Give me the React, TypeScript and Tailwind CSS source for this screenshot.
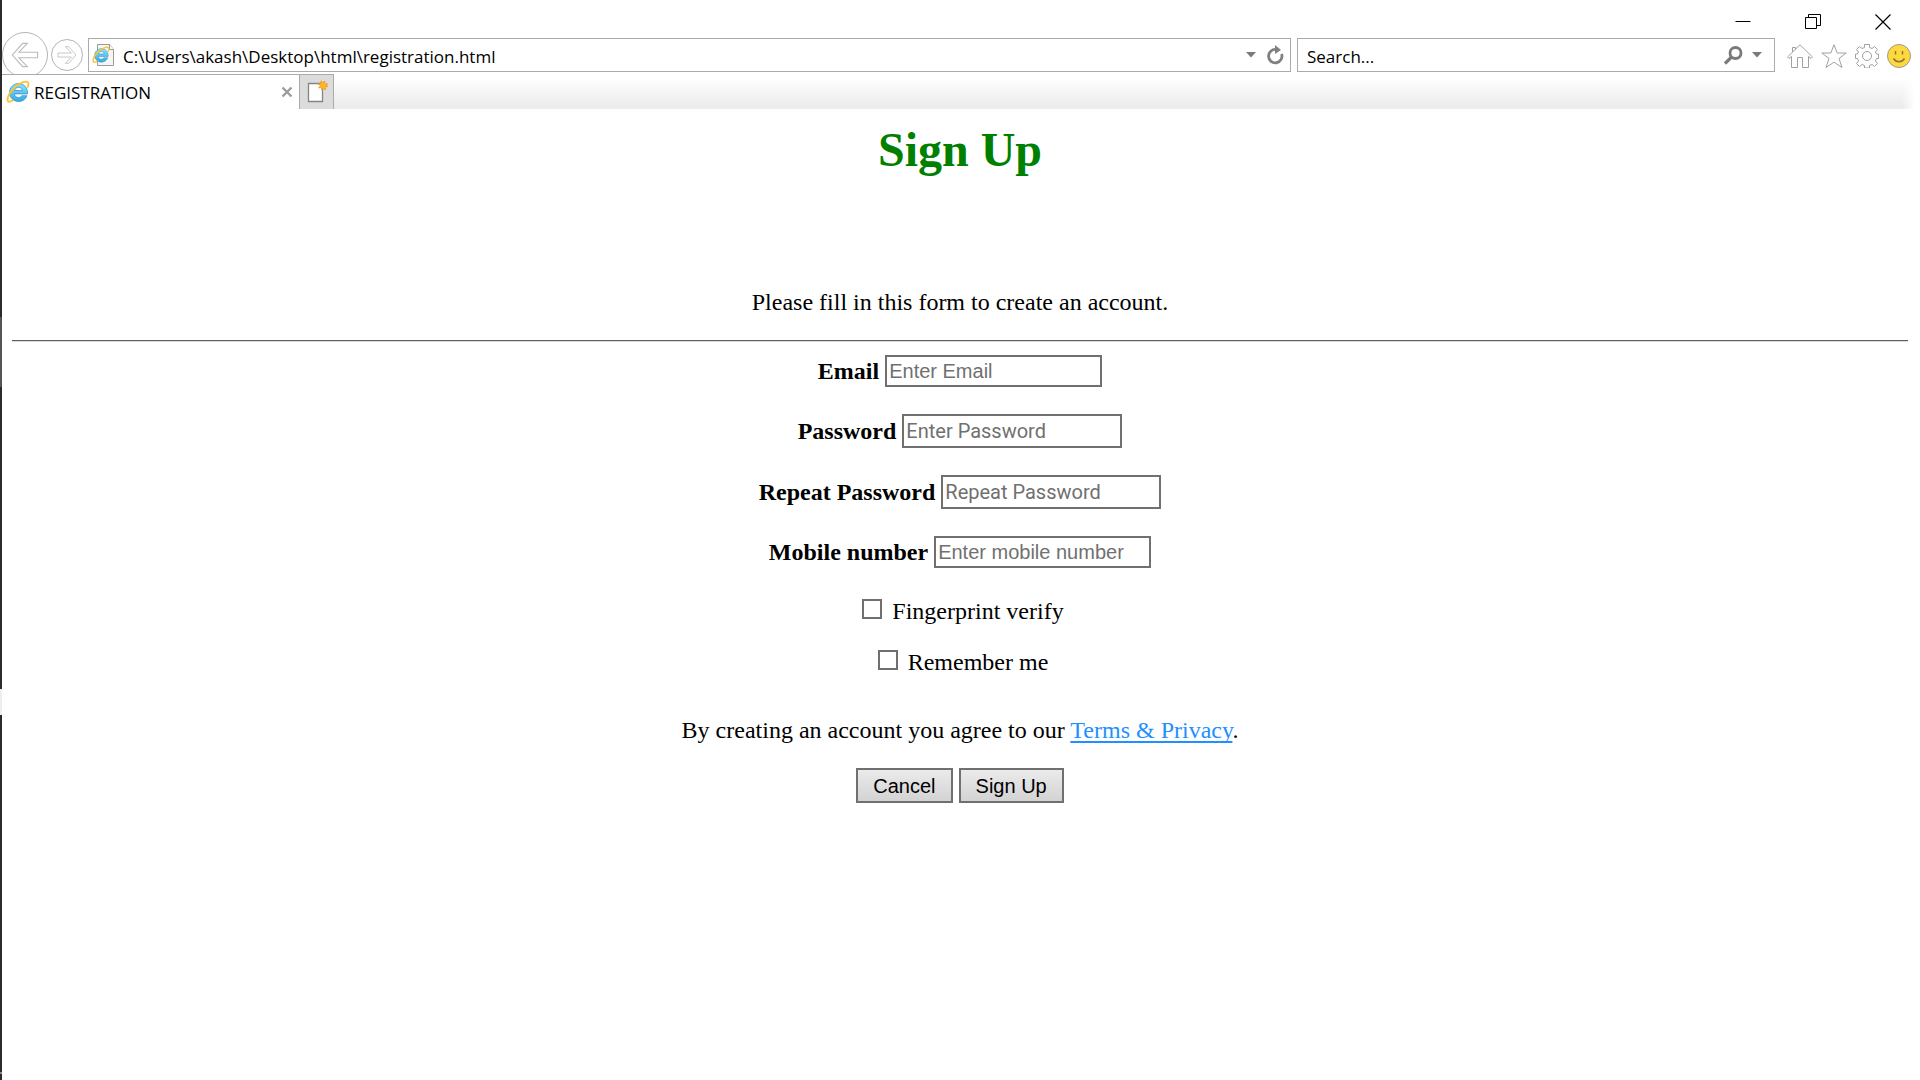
import { ReactNode } from 'react';

function IELogo({ className }: { className: string }) {
    return (
        <svg viewBox="0 0 24 24" className={className} aria-hidden="true">
            <defs>
                <linearGradient id="ieBlue" x1="0" y1="0" x2="0" y2="1">
                    <stop offset="0" stopColor="#8be3fb" />
                    <stop offset="1" stopColor="#35a9e4" />
                </linearGradient>
            </defs>
            <path d="M12.500 3.500c-5 0-9 4-9 9s4 9 9 9c4 0 7.300-2.300 8.500-5.800h-5.200c-.7 1.200-1.900 1.800-3.300 1.800-2.300 0-3.900-1.500-4-3.600h13c.5-6-3.500-10.400-9-10.400zM8.600 10.500c.3-1.900 1.900-3.200 3.900-3.200s3.700 1.300 3.900 3.200z" fill="url(#ieBlue)" stroke="#2a8dc4" strokeWidth="0.700" />
            <path d="M6.500 20.500c-3 1.900-4.900 1.600-5-.6-.2-3.500 3.500-9.500 8.500-13.700 4.700-4 10.300-5.700 12-3.700.9 1.100.6 2.600-.2 4.300" fill="none" stroke="#fbc42f" strokeWidth="1.900" strokeLinecap="round" />
        </svg>
    );
}

function Arrow({ className }: { className: string }) {
    return (
        <svg viewBox="0 0 30 30" className={className} aria-hidden="true">
            <path d="M12.500 2.500h5l-9 9.500h20v6h-20l9 9.500h-5L1.500 15z" fill="none" stroke="#bababa" strokeWidth="1.200" />
        </svg>
    );
}

function Caret() {
    return (
        <svg viewBox="0 0 10 6" className="w-[10px] h-[6px]" aria-hidden="true">
            <path d="M0 0h10L5 5.500z" fill="#7a7a7a" />
        </svg>
    );
}

function WindowButtons() {
    return (
        <div className="flex justify-end items-center gap-[54px] h-[36px] pt-[7px] pr-[29px]">
            <button type="button" aria-label="Minimize">
                <svg viewBox="0 0 16 16" className="size-4"><path d="M0.500 7.500h15" stroke="#000" /></svg>
            </button>
            <button type="button" aria-label="Restore">
                <svg viewBox="0 0 16 16" className="size-4"><path d="M.5 3.500h11v11h-11zM3.500 3.500v-3h12v11h-4" fill="none" stroke="#000" /></svg>
            </button>
            <button type="button" aria-label="Close">
                <svg viewBox="0 0 16 16" className="size-4"><path d="M.5.5l15 15M15.500.5l-15 15" stroke="#000" strokeWidth="1.200" /></svg>
            </button>
        </div>
    );
}

function AddressRow() {
    return (
        <div className="flex items-center h-[38px] pr-[9px]">
            <button type="button" aria-label="Back" className="shrink-0 size-[46px] rounded-full border border-[#b4b4b4] flex items-center justify-center">
                <Arrow className="size-7" />
            </button>
            <button type="button" aria-label="Forward" className="shrink-0 ml-[3px] size-8 rounded-full border border-[#b4b4b4] flex items-center justify-center">
                <Arrow className="size-5 rotate-180" />
            </button>
            <div className="flex-1 ml-[5px] h-[34px] border border-[#ababab] flex items-center pl-[3px] pr-[6px]">
                <div className="relative size-6 shrink-0">
                    <svg viewBox="0 0 24 24" className="absolute size-6" aria-hidden="true">
                        <path d="M5.500 1.500h12l4 5v16h-16z" fill="#f6f6f6" stroke="#9a9a9a" />
                        <path d="M17.500 1.500v5h4" fill="#fff" stroke="#9a9a9a" />
                    </svg>
                    <IELogo className="absolute top-[3px] size-[18px]" />
                </div>
                <input aria-label="Address" defaultValue="C:\Users\akash\Desktop\html\registration.html" className="flex-1 ml-[7px] pt-[3px] text-[17px] outline-none" />
                <button type="button" aria-label="Show address history"><Caret /></button>
                <button type="button" aria-label="Refresh" className="ml-[10px]">
                    <svg viewBox="0 0 18 20" className="w-[18px] h-5">
                        <path d="M10 4.500A6.700 6.700 0 1 0 15.600 9" fill="none" stroke="#808080" strokeWidth="2.800" />
                        <path d="M9 0l6 5-6 4z" fill="#808080" />
                    </svg>
                </button>
            </div>
            <div className="w-[478px] ml-[6px] h-[34px] border border-[#ababab] flex items-center pl-[9px] pr-[12px]">
                <input aria-label="Search" placeholder="Search..." className="flex-1 pt-[3px] text-[17px] outline-none placeholder:text-black" />
                <button type="button" aria-label="Search the web">
                    <svg viewBox="0 0 19 19" className="size-[19px]">
                        <circle cx="11.500" cy="7" r="5.500" fill="none" stroke="#7a7a7a" strokeWidth="2.800" />
                        <path d="M7.500 11l-6.500 6.500" stroke="#7a7a7a" strokeWidth="3.200" />
                    </svg>
                </button>
                <button type="button" aria-label="Search options" className="ml-[9px]"><Caret /></button>
            </div>
            <div className="flex items-center gap-[8px] ml-[12px] pt-[2px]">
                <button type="button" aria-label="Home">
                    <svg viewBox="0 0 26 24" className="w-[26px] h-6" fill="none" stroke="#a0a0a0">
                        <path d="M.5 13L13 .8 25.500 13l-1.500 1.500-2.500-2V23.500h-6v-10h-5v10h-6v-11l-2.500 2zM5.500 8V3.500h3v2" />
                    </svg>
                </button>
                <button type="button" aria-label="Favorites">
                    <svg viewBox="0 0 26 24" className="w-[26px] h-6" fill="none" stroke="#a0a0a0">
                        <path d="M13 .8l3.200 8.200h9l-7.200 5.500 3 9L13 18.200 5 23.500l3-9L.8 9h9z" />
                    </svg>
                </button>
                <button type="button" aria-label="Tools">
                    <svg viewBox="0 0 24 24" className="size-6" fill="none" stroke="#a0a0a0">
                        <path d="M9.500.5h5v3l2.500 1 2.500-2 3 3-2 2.500 1 2h2v4.500h-2l-1 2.500 2 2.500-3 3-2.500-2-2.500 1v2.500h-5v-2.500l-2.500-1-2.500 2-3-3 2-2.500-1-2.500h-2V10h2l1-2-2-2.500 3-3 2.500 2 2.500-1z" />
                        <circle cx="12" cy="12" r="4.500" />
                    </svg>
                </button>
                <button type="button" aria-label="Send a smile">
                    <svg viewBox="0 0 24 24" className="size-6">
                        <circle cx="12" cy="12" r="11.500" fill="#ffd83d" stroke="#9b9b9b" />
                        <path d="M8.500 7v3.500M15.500 7v3.500" stroke="#8a7a3a" strokeWidth="1.500" />
                        <path d="M6.500 14.500c2.500 4.300 8.500 4.300 11 0" fill="none" stroke="#8a7a3a" strokeWidth="1.500" />
                    </svg>
                </button>
            </div>
        </div>
    );
}

function TabRow() {
    return (
        <div className="relative flex h-[35px] bg-white">
            <div className="w-[297px] bg-white border-t border-[#ababab] flex items-center pl-[4px] pr-[6px]">
                <IELogo className="size-6" />
                <span className="ml-[4px] pt-[2px] flex-1 text-[17px]">REGISTRATION</span>
                <button type="button" aria-label="Close tab">
                    <svg viewBox="0 0 12 12" className="size-3"><path d="M1.500 1.500l9 9M10.500 1.500l-9 9" stroke="#9c9c9c" strokeWidth="2.400" /></svg>
                </button>
            </div>
            <button type="button" aria-label="New tab" className="w-[35px] bg-[#dcdcdc] border border-b-0 border-[#ababab] flex items-center justify-center">
                <svg viewBox="0 0 22 24" className="w-[22px] h-6">
                    <path d="M2.500 3.500h14v18h-14z" fill="#fff" stroke="#858585" strokeWidth="1.300" />
                    <circle cx="17" cy="5.500" r="3.200" fill="#fdb52a" />
                    <circle cx="17" cy="5.500" r="3.800" fill="none" stroke="#f39a12" strokeWidth="2" strokeDasharray="1.600 1.400" />
                </svg>
            </button>
            <div className="flex-1 bg-linear-to-b from-white from-10% to-[#ececec] to-90%" />
            <div className="w-4 mr-[2px] bg-linear-to-b from-white from-10% to-[#ececec] to-90% mask-r-from-0% mask-r-to-80%" />
        </div>
    );
}

function Field({ id, label, placeholder, inputClass, type = 'text' }: { id: string; label: string; placeholder: string; inputClass: string; type?: string }) {
    return (
        <div className="flex justify-center items-center gap-[6px]">
            <label htmlFor={id} className="font-bold">{label}</label>
            <input id={id} type={type} placeholder={placeholder} className={`border-2 border-[#707070] px-[2px] text-[20px] placeholder:text-[#707070] outline-none ${inputClass}`} />
        </div>
    );
}

function Check({ id, children }: { id: string; children: ReactNode }) {
    return (
        <div className="flex justify-center items-center gap-[10px] pl-[6px]">
            <input id={id} type="checkbox" className="appearance-none size-5 mb-[4px] border-2 border-[#707070] bg-white checked:bg-[#707070]" />
            <label htmlFor={id}>{children}</label>
        </div>
    );
}

const textBox = "w-[217px] h-8 font-['Liberation_Sans',sans-serif]";
const passBox = "w-[220px] h-[34px] font-[Roboto,sans-serif]";
const formButton = "h-[35px] px-[15px] border-2 border-[#707070] bg-linear-to-b from-[#ebebeb] to-[#d3d3d3] font-['Liberation_Sans',sans-serif] text-[20px] leading-[28px]";

export default function App() {
    return (
        <div className="min-h-screen flex bg-white text-black">
            {/* edge of the desktop behind the window */}
            <div className="w-[2px] shrink-0 flex flex-col bg-[#2b2b2d]">
                <div className="mt-[317px] h-[70px] bg-[#555557]" />
                <div className="mt-[302px] h-[26px] bg-[#eeeeee]" />
                <div className="mt-[357px] h-[2px] bg-[#8a8a8a]" />
            </div>
            <div className="flex-1 flex flex-col">
                <header className="font-['Open_Sans',sans-serif]">
                    <WindowButtons />
                    <AddressRow />
                    <TabRow />
                </header>
                <main className="pl-[10px] pr-[12px] text-center font-['Liberation_Serif',serif] text-[24px] leading-[28px]">
                    <form onSubmit={(e) => e.preventDefault()}>
                        <h1 className="pt-[13px] font-bold text-[48px] leading-[56px] text-[#008000]">Sign Up</h1>
                        <p className="mt-[110px]">Please fill in this form to create an account.</p>
                        <hr className="mt-[24px] border-t border-b border-t-[#606060] border-b-[#d8d8d8]" />
                        <div className="mt-[13px] flex flex-col gap-[27px]">
                            <Field id="email" label="Email" placeholder="Enter Email" inputClass={textBox} />
                            <Field id="psw" type="password" label="Password" placeholder="Enter Password" inputClass={passBox} />
                            <Field id="psw-repeat" type="password" label="Repeat Password" placeholder="Repeat Password" inputClass={passBox} />
                            <Field id="mobile" label="Mobile number" placeholder="Enter mobile number" inputClass={textBox} />
                        </div>
                        <div className="mt-[29px] flex flex-col gap-[23px]">
                            <Check id="fingerprint">Fingerprint verify</Check>
                            <Check id="remember">Remember me</Check>
                        </div>
                        <p className="mt-[40px]">By creating an account you agree to our <a href="#" className="text-[#1e90ff] underline decoration-2 underline-offset-3 [text-decoration-skip-ink:none]">Terms &amp; Privacy</a>.</p>
                        <div className="mt-[24px] flex justify-center gap-[6px]">
                            <button type="button" className={formButton}>Cancel</button>
                            <button type="submit" className={formButton}>Sign Up</button>
                        </div>
                    </form>
                </main>
            </div>
        </div>
    );
}
